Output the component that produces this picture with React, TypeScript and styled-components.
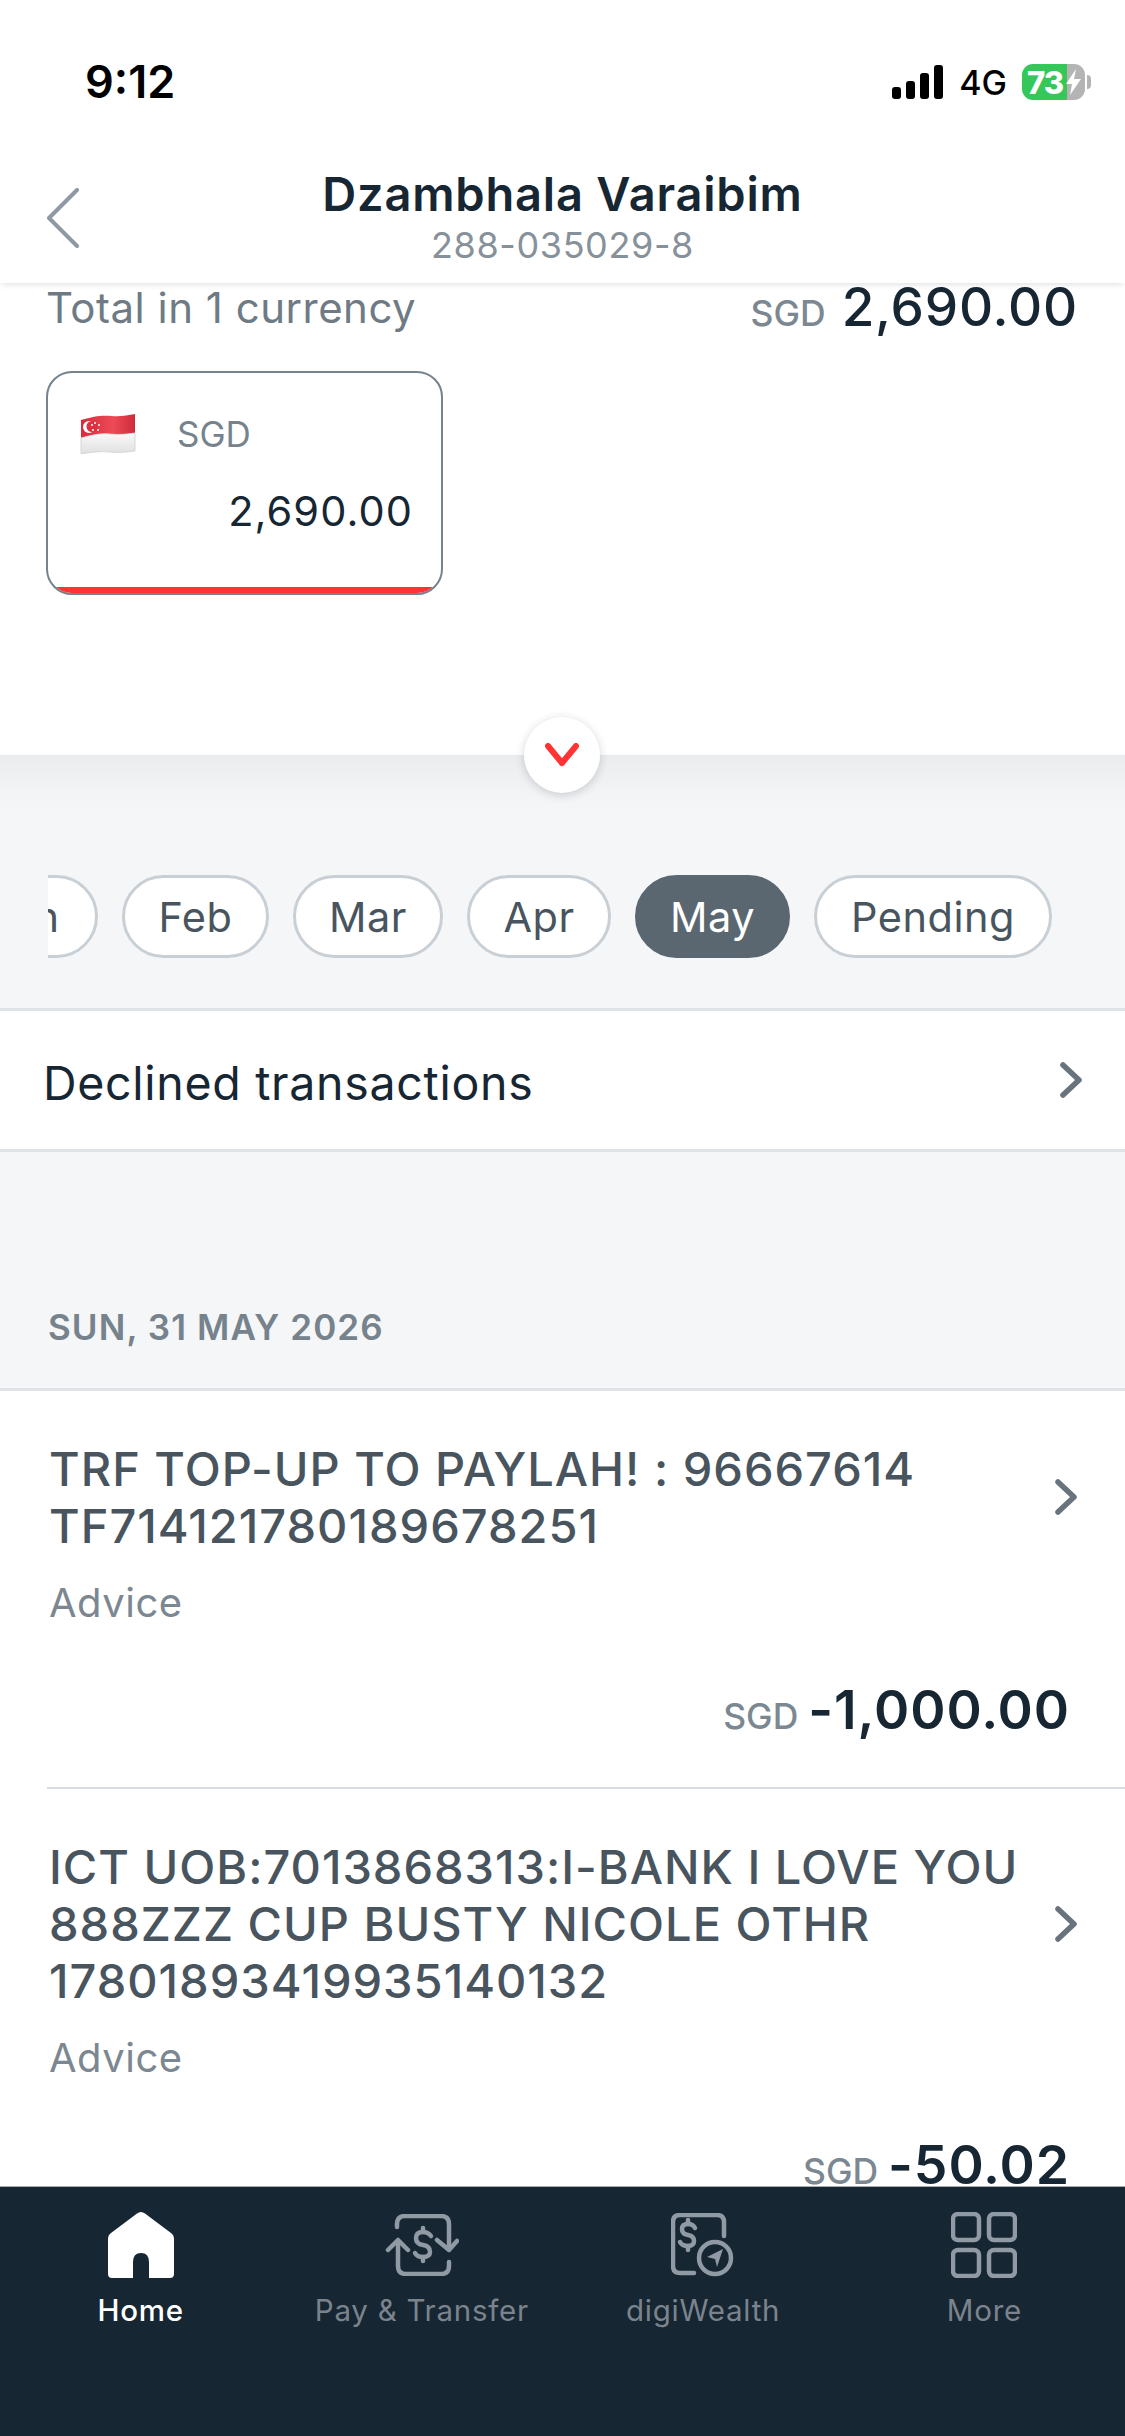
import React from "react";
import styled, { createGlobalStyle } from "styled-components";

const Global = createGlobalStyle`
  html, body { margin: 0; padding: 0; background: #fff; }
  * { box-sizing: border-box; }
`;
const Screen = styled.div`
  width: 1125px; height: 2436px; display: flex; flex-direction: column; overflow: hidden;
  background: #fff; font-family: Inter, "Noto Sans", sans-serif; color: #172633;
`;
const StatusBar = styled.div`
  height: 148px; flex: none; display: flex; justify-content: space-between; align-items: flex-start;
  padding: 54px 34px 0 85px;
`;
const Time = styled.div`
  font-size: 45px; line-height: 56px; font-weight: 600; color: #000; font-family: Inter, sans-serif;
`;
const StatusRight = styled.div`
  display: flex; align-items: center; gap: 15px; height: 56px;
`;
const NetLabel = styled.span`
  font-size: 34px; font-weight: 500; color: #000;
`;
const Battery = styled.div`
  position: relative; width: 63px; height: 36px; border-radius: 11px; overflow: hidden;
  background: linear-gradient(90deg, #35c759 0 71%, #b4b4b4 71% 100%);
  display: flex; align-items: center; padding-left: 5px;
  font-size: 31px; font-weight: 800; color: #fff; letter-spacing: -1px;
`;
const BatteryWrap = styled.div` display: flex; align-items: center; gap: 2px; `;
const BatteryTip = styled.div`
  width: 4px; height: 14px; background: #b4b4b4; border-radius: 0 4px 4px 0;
`;
const Bolt = styled.svg` position: absolute; right: 4px; top: 5px; `;
const Header = styled.header`
  height: 135px; flex: none; position: relative; z-index: 2; background: #fff;
  display: flex; flex-direction: column; align-items: center; padding-top: 19px;
  box-shadow: 0 3px 6px -2px rgba(30, 40, 50, 0.16);
`;
const Back = styled.svg` position: absolute; left: 46px; top: 40px; `;
const Title = styled.div`
  font-size: 47px; line-height: 54px; font-weight: 600; letter-spacing: 0.8px;
`;
const Account = styled.div`
  font-size: 36px; line-height: 48px; color: #87919a; letter-spacing: 0.6px;
`;
const Content = styled.main`
  flex: 1; min-height: 0; overflow: hidden; display: flex; flex-direction: column;
`;
const Summary = styled.section`
  height: 472px; flex: none; position: relative; padding: 0 47px 0 46px; background: #fff;
`;
const TotalRow = styled.div`
  display: flex; justify-content: space-between; align-items: center; height: 48px;
`;
const TotalLabel = styled.div`
  font-size: 42px; color: #6e7a84; letter-spacing: 0.5px;
`;
const Money = styled.div`
  display: flex; align-items: baseline; gap: 16px;
`;
const Cur = styled.span`
  font-size: 35.5px; font-weight: 500; color: #7b8791;
`;
const Big = styled.span`
  font-size: 53px; font-weight: 500; color: #172633; letter-spacing: 0.8px;
`;
const Card = styled.div`
  width: 397px; height: 224px; margin-top: 40px; border: 2px solid #76828c; border-radius: 26px;
  overflow: hidden; display: flex; flex-direction: column; background: #fff;
`;
const CardTop = styled.div`
  display: flex; align-items: center; gap: 41px; padding: 37px 0 0 32px; height: 84px;
`;
const CardCur = styled.span` font-size: 35px; color: #76828c; `;
const CardAmount = styled.div`
  text-align: right; padding-right: 28px; margin-top: 26px; font-size: 41.5px; line-height: 56px; letter-spacing: 1.1px;
`;
const CardBar = styled.div`
  margin-top: auto; height: 6px; background: #ff3333;
`;
const Toggle = styled.button`
  position: absolute; left: 524px; bottom: -38px; width: 76px; height: 76px; border-radius: 50%;
  border: 0; padding: 0; background: #fff; display: flex; align-items: center; justify-content: center;
  box-shadow: 0 2px 10px rgba(30, 40, 50, 0.2); z-index: 1;
`;
const Months = styled.section`
  height: 253px; flex: none; padding: 120px 0 0 48px;
  background: linear-gradient(180deg, #eaecee 0, #f3f4f6 40px, #f4f6f8 60px);
`;
const ChipClip = styled.div`
  display: flex; gap: 24px; overflow: hidden;
`;
const Chip = styled.div`
  flex: none; height: 83px; width: ${p => p.$w}px; border-radius: 42px;
  margin-left: ${p => p.$ml ?? 0}px;
  display: flex; align-items: center; justify-content: center;
  font-size: 41.5px; letter-spacing: 0.5px;
  color: ${p => (p.$active ? "#fff" : "#48545e")};
  background: ${p => (p.$active ? "#5b6770" : "#fff")};
  border: 3px solid ${p => (p.$active ? "#5b6770" : "#c8cfd5")};
`;
const LinkRow = styled.div`
  height: 144px; flex: none; display: flex; justify-content: space-between; align-items: center;
  padding: 0 42px 0 43px; background: #fff; border-top: 3px solid #dfe3e7; border-bottom: 3px solid #dfe3e7;
`;
const LinkText = styled.div` font-size: 46.5px; letter-spacing: 0.7px; margin-top: 6px; `;
const DateBand = styled.div`
  height: 239px; flex: none; display: flex; align-items: flex-end; padding: 0 0 40px 48px;
  background: #f4f6f8; border-bottom: 3px solid #dfe3e7;
  font-size: 35px; font-weight: 600; color: #76828c; letter-spacing: 1.1px;
`;
const Tx = styled.article`
  flex: none; background: #fff; margin-left: 47px; padding: 49px 47px 0 2px; position: relative;
  border-bottom: ${p => (p.$last ? "0" : "2px solid #d8dce0")};
  height: ${p => p.$h}px;
`;
const TxTop = styled.div`
  display: flex; justify-content: space-between; align-items: center;
`;
const TxTitle = styled.div`
  font-size: 47px; line-height: 57px; color: #48545e; font-weight: 500; letter-spacing: 1px; white-space: pre-line;
`;
const TxMeta = styled.div`
  font-size: 40px; line-height: 50px; color: #7b8791; margin-top: 24px; letter-spacing: 0.5px;
`;
const TxAmount = styled.div`
  display: flex; justify-content: flex-end; align-items: baseline; margin-top: 52px; gap: 10px;
  margin-right: 8px;
`;
const TxBig = styled.span`
  font-size: 53.5px; line-height: 60px; font-weight: 600; color: #172633; letter-spacing: 0.9px;
`;
const Nav = styled.nav`
  height: 250px; flex: none; background: #172633; border-top: 1px solid #a9acaf;
  display: grid; grid-template-columns: repeat(4, 1fr); padding-top: 24px;
`;
const NavItem = styled.div`
  display: flex; flex-direction: column; align-items: center;
  color: ${p => (p.$active ? "#fff" : "#7b848c")};
  font-size: 29.5px; letter-spacing: 0.75px; font-weight: ${p => (p.$active ? 500 : 400)};
`;
const NavIcon = styled.div`
  height: 68px; display: flex; align-items: center; justify-content: center; margin-bottom: 13px;
`;

const Chevron = () => (
  <svg width="24" height="36" viewBox="0 0 24 36" fill="none">
    <path d="M4 3 L20 18 L4 33" stroke="#68737d" strokeWidth="5.5" strokeLinecap="round" strokeLinejoin="round" />
  </svg>
);
const Flag = () => (
  <svg width="56" height="40" viewBox="0 0 56 40">
    <defs>
      <linearGradient id="flagRed" x1="0" x2="1" y1="0" y2="0">
        <stop offset="0" stopColor="#d92b3b" /><stop offset="0.6" stopColor="#ec4a58" /><stop offset="1" stopColor="#d02a38" />
      </linearGradient>
      <linearGradient id="flagWhite" x1="0" x2="0" y1="0" y2="1">
        <stop offset="0" stopColor="#fafafa" /><stop offset="1" stopColor="#dfdfdf" />
      </linearGradient>
    </defs>
    <path d="M1 6 C14 2 22 1 32 2 C40 3 48 1 55 0 V19 C46 20 40 21 30 20 C20 19 12 21 1 24 Z" fill="url(#flagRed)" />
    <path d="M1 24 C12 21 20 19 30 20 C40 21 46 20 55 19 V37 C46 38 40 39 30 38 C20 37 12 38 1 40 Z" fill="url(#flagWhite)" stroke="#cfcfcf" strokeWidth="0.8" />
    <circle cx="9" cy="13" r="6" fill="#fff" />
    <circle cx="12" cy="12.5" r="5.5" fill="#e0303f" />
    <g fill="#fff">
      <circle cx="15" cy="9" r="1" /><circle cx="19" cy="11" r="1" /><circle cx="18" cy="16" r="1" /><circle cx="13" cy="16" r="1" /><circle cx="12" cy="11" r="1" />
    </g>
  </svg>
);
const HomeIcon = () => (
  <svg width="66" height="66" viewBox="0 0 66 66">
    <path fill="#fff" fillRule="evenodd" d="M33 0 Q31 0 29 1.5 L3 21 Q0 23 0 27 V62 Q0 66 4 66 H25 V50 Q25 41 33 41 Q41 41 41 50 V66 H62 Q66 66 66 62 V27 Q66 23 63 21 L37 1.5 Q35 0 33 0 Z" />
  </svg>
);
const PayIcon = () => (
  <svg width="74" height="62" viewBox="0 0 74 62" fill="none" stroke="#8f9aa4" strokeWidth="4.5" strokeLinecap="round" strokeLinejoin="round">
    <path d="M12 13 V10 Q12 2 20 2 H56 Q64 2 64 10 V35" />
    <path d="M52 26 L64 36 L72 27" />
    <path d="M3 36 L13 26 L23 36" />
    <path d="M13 27 V52 Q13 60 21 60 H56 Q64 60 64 52 V48" />
    <path d="M46 22 Q43 18 38 18 Q31 18 31 24 Q31 30 38 31 Q45 32 45 38 Q45 43 38 43 Q32 43 30 39" />
    <path d="M38 14 V18 M38 43 V47" />
  </svg>
);
const WealthIcon = () => (
  <svg width="64" height="64" viewBox="0 0 64 64" fill="none" stroke="#8f9aa4" strokeWidth="4.5" strokeLinecap="round" strokeLinejoin="round">
    <path d="M53 23 V9 Q53 2 46 2 H9 Q2 2 2 9 V53 Q2 60 9 60 H23" />
    <circle cx="44" cy="45" r="16" />
    <path d="M52 36 L36 44 L44 46 L46 54 Z" fill="#8f9aa4" stroke="none" />
    <path d="M24 15 Q22 11 17 11 Q11 11 11 16 Q11 21 17 22 Q23 23 23 28 Q23 33 17 33 Q11 33 9 29" />
    <path d="M17 7 V11 M17 33 V37" />
  </svg>
);
const MoreIcon = () => (
  <svg width="66" height="66" viewBox="0 0 66 66" fill="none" stroke="#8f9aa4" strokeWidth="4.5">
    <rect x="2" y="2" width="26" height="26" rx="5" />
    <rect x="38" y="2" width="26" height="26" rx="5" />
    <rect x="2" y="38" width="26" height="26" rx="5" />
    <rect x="38" y="38" width="26" height="26" rx="5" />
  </svg>
);

export default function App() {
  return (
    <Screen>
      <Global />
      <StatusBar>
        <Time>9:12</Time>
        <StatusRight>
          <svg width="52" height="34" viewBox="0 0 52 34" fill="#000">
            <rect x="0" y="22" width="9" height="12" rx="3" />
            <rect x="14" y="16" width="9" height="18" rx="3" />
            <rect x="28" y="8" width="9" height="26" rx="3" />
            <rect x="42" y="0" width="9" height="34" rx="3" />
          </svg>
          <NetLabel>4G</NetLabel>
          <BatteryWrap>
            <Battery>
              73
              <Bolt width="15" height="26" viewBox="0 0 15 26"><path d="M10 0 L0 15 H6 L4 26 L15 10 H8 Z" fill="#fff" /></Bolt>
            </Battery>
            <BatteryTip />
          </BatteryWrap>
        </StatusRight>
      </StatusBar>
      <Header>
        <Back width="34" height="60" viewBox="0 0 34 60" fill="none">
          <path d="M31 2 L3 30 L31 58" stroke="#8e99a3" strokeWidth="4" strokeLinecap="round" strokeLinejoin="round" />
        </Back>
        <Title>Dzambhala Varaibim</Title>
        <Account>288-035029-8</Account>
      </Header>
      <Content>
        <Summary>
          <TotalRow>
            <TotalLabel>Total in 1 currency</TotalLabel>
            <Money><Cur>SGD</Cur><Big>2,690.00</Big></Money>
          </TotalRow>
          <Card>
            <CardTop><Flag /><CardCur>SGD</CardCur></CardTop>
            <CardAmount>2,690.00</CardAmount>
            <CardBar />
          </Card>
          <Toggle aria-label="Expand">
            <svg width="34" height="24" viewBox="0 0 34 24" fill="none">
              <path d="M3 3 L17 20 L31 3" stroke="#ff3333" strokeWidth="6" strokeLinecap="round" strokeLinejoin="round" />
            </svg>
          </Toggle>
        </Summary>
        <Months>
          <ChipClip>
            <Chip $w={150} $ml={-100}>Jan</Chip>
            <Chip $w={147}>Feb</Chip>
            <Chip $w={150}>Mar</Chip>
            <Chip $w={144}>Apr</Chip>
            <Chip $w={155} $active>May</Chip>
            <Chip $w={238}>Pending</Chip>
          </ChipClip>
        </Months>
        <LinkRow>
          <LinkText>Declined transactions</LinkText>
          <Chevron />
        </LinkRow>
        <DateBand>SUN, 31 MAY 2026</DateBand>
        <Tx $h={398}>
          <TxTop>
            <TxTitle>{"TRF TOP-UP TO PAYLAH! : 96667614\nTF714121780189678251"}</TxTitle>
            <Chevron />
          </TxTop>
          <TxMeta>Advice</TxMeta>
          <TxAmount><Cur>SGD</Cur><TxBig>-1,000.00</TxBig></TxAmount>
        </Tx>
        <Tx $h={500} $last>
          <TxTop>
            <TxTitle>{"ICT UOB:7013868313:I-BANK I LOVE YOU\n888ZZZ CUP BUSTY NICOLE OTHR\n17801893419935140132"}</TxTitle>
            <Chevron />
          </TxTop>
          <TxMeta>Advice</TxMeta>
          <TxAmount><Cur>SGD</Cur><TxBig>-50.02</TxBig></TxAmount>
        </Tx>
      </Content>
      <Nav>
        <NavItem $active><NavIcon><HomeIcon /></NavIcon>Home</NavItem>
        <NavItem><NavIcon><PayIcon /></NavIcon>Pay &amp; Transfer</NavItem>
        <NavItem><NavIcon><WealthIcon /></NavIcon>digiWealth</NavItem>
        <NavItem><NavIcon><MoreIcon /></NavIcon>More</NavItem>
      </Nav>
    </Screen>
  );
}
